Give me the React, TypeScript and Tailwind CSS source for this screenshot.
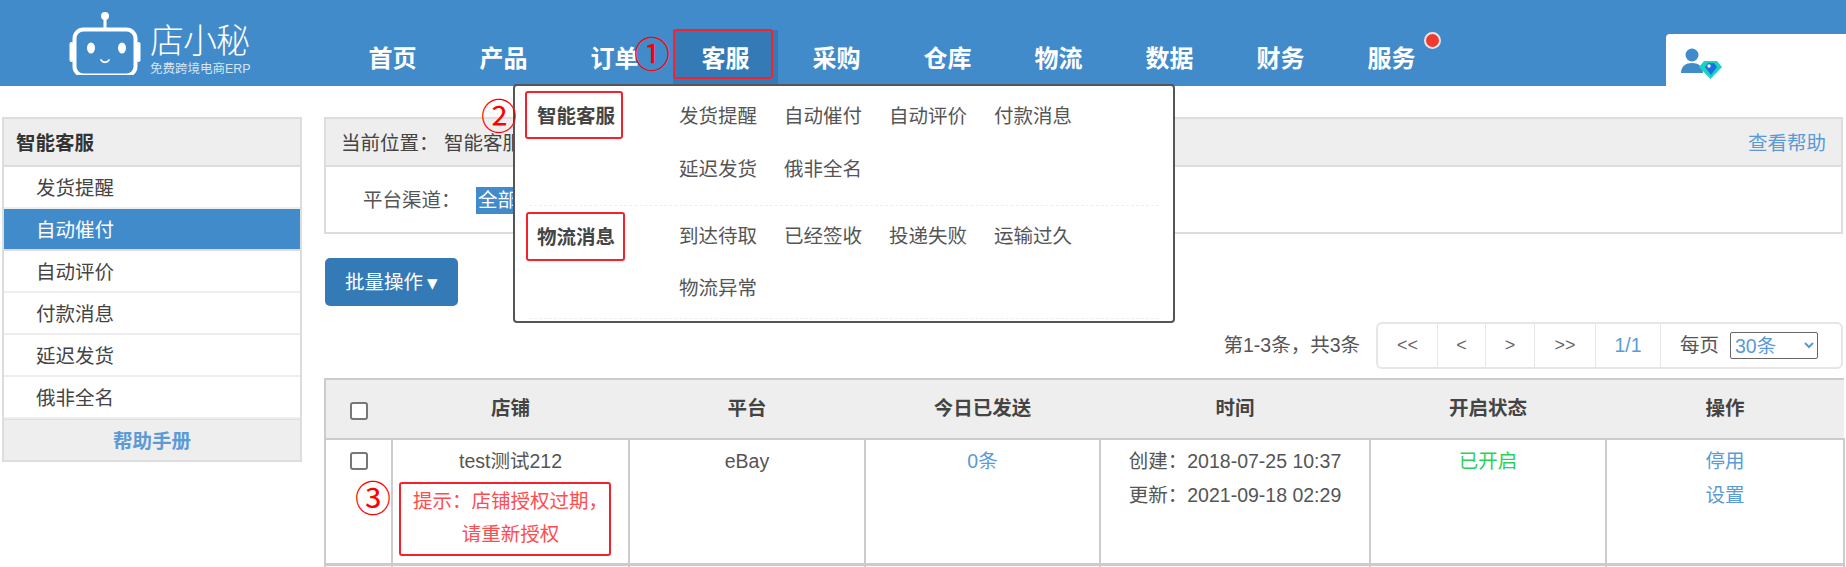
import React from "react";

const nav = ["首页", "产品", "订单", "客服", "采购", "仓库", "物流", "数据", "财务", "服务"];
const side = ["发货提醒", "自动催付", "自动评价", "付款消息", "延迟发货", "俄非全名"];
const fontFamily = '"Liberation Sans", "Noto Sans CJK SC", sans-serif';

function Logo() {
  return (
    <svg width="72" height="68" viewBox="0 0 72 68" className="shrink-0">
      <circle cx="36" cy="9" r="4" fill="#fff" />
      <rect x="34.500" y="10" width="3" height="12" fill="#fff" />
      <rect x="5.500" y="22.500" width="61" height="46" rx="9" fill="none" stroke="#fff" strokeWidth="4" />
      <rect x="0.500" y="35" width="4" height="20" rx="2" fill="#fff" />
      <rect x="67.500" y="35" width="4" height="20" rx="2" fill="#fff" />
      <ellipse cx="22" cy="41" rx="4" ry="5.500" fill="#fff" />
      <ellipse cx="53" cy="41" rx="4" ry="5.500" fill="#fff" />
      <path d="M32 53c2 3 6 3 8 0" fill="none" stroke="#fff" strokeWidth="1.800" strokeLinecap="round" />
    </svg>
  );
}

function UserIcon() {
  return (
    <svg width="42" height="32" viewBox="0 0 42 32">
      <circle cx="11" cy="8" r="6.500" fill="#428bca" />
      <path d="M0 26c0-7 5-10 11-10s11 3 11 10z" fill="#428bca" />
      <path d="M18 20l5-6h13l5 6-11.500 12z" fill="#19d3c5" />
      <path d="M24 20l3-4h6l3 4-6 8z" fill="#1c6fe0" />
      <circle cx="28" cy="19" r="1.700" fill="#fff" />
    </svg>
  );
}

function DropRow({ title, rows, box, titleBox, rowBox }: { title: string; rows: string[][]; box: string; titleBox: string; rowBox: string }) {
  return (
    <div className={box}>
      <div className={titleBox}>{title}</div>
      <div>
        {rows.map((r) => (
          <div key={r[0]} className={rowBox}>
            {r.map((t) => (
              <span key={t} className="w-[78px] whitespace-nowrap">{t}</span>
            ))}
          </div>
        ))}
      </div>
    </div>
  );
}

function Check() {
  return (
    <input
      type="checkbox"
      className="block h-[18px] w-[18px] appearance-none rounded-[3px] border-2 border-[#777] bg-white"
    />
  );
}

const th = "h-[60px] border-b-2 border-[#ccc] bg-[#eee] text-center font-bold text-[#444]";
const td = "border-r-2 border-b-[3px] border-[#ccc] p-0 pt-[4px] text-center align-top leading-[34px]";
const pageCell = "flex h-full items-center justify-center border-r border-[#e6e6e6] text-[#666]";

export default function App() {
  return (
    <div
      className="relative h-[567px] w-[1846px] overflow-hidden bg-white text-[19.5px] text-[#555]"
      style={{ fontFamily }}
    >
      <header className="flex h-[86px] items-end bg-[#428bca] text-white">
        <div className="flex h-[86px] w-[337px] shrink-0 items-start pl-[69px] pt-[7px]">
          <Logo />
          <div className="ml-[9px] w-[110px]">
            <div className="mt-[15px] text-[34px] leading-[39px] font-light tracking-[-1px] whitespace-nowrap">店小秘</div>
            <div className="mt-[1px] text-[12.5px] leading-[14px] whitespace-nowrap text-[#d5e5f3]">免费跨境电商ERP</div>
          </div>
        </div>
        <nav className="flex h-[56px]">
          {nav.map((n) => (
            <div key={n} className="relative flex h-[56px] w-[111px] items-center justify-center pt-[2px]">
              {n === "客服" && <div className="absolute inset-x-[3px] inset-y-0 bg-[#337ab7]" />}
              <span className="relative text-[24px] font-bold">{n}</span>
              {n === "服务" && (
                <span className="absolute left-[88px] top-[2px] h-[17px] w-[17px] rounded-full border-2 border-[#e6e6e6] bg-[#f0392f]" />
              )}
            </div>
          ))}
        </nav>
        <div className="ml-auto flex h-[52px] w-[180px] rounded-tl-[4px] bg-white pl-[15px] pt-[13px]">
          <UserIcon />
        </div>
      </header>

      <main className="flex pl-[2px] pt-[31px]">
        <aside className="h-[345px] w-[300px] shrink-0 border-2 border-[#ddd]">
          <div className="flex h-[48px] items-center border-b-2 border-[#ddd] bg-[#eee] pl-[12px] pt-[3px] font-bold text-[#333]">智能客服</div>
          {side.map((s, i) => (
            <div
              key={s}
              className={
                i === 1
                  ? "flex h-[42px] items-center border-b-2 border-[#ddd] bg-[#428bca] pl-[32px] pt-[3px] text-white"
                  : "flex h-[42px] items-center border-b-2 border-[#eee] pl-[32px] pt-[3px] text-[#444]"
              }
            >
              {s}
            </div>
          ))}
          <div className="flex h-[41px] items-center justify-center border-t border-[#ddd] bg-[#eee] pt-[3px] font-bold text-[#5b9ad6]">帮助手册</div>
        </aside>

        <section className="ml-[22px] w-[1519px] shrink-0">
          <div className="h-[117px] border-2 border-[#ddd]">
            <div className="flex h-[48px] items-center justify-between border-b-2 border-[#ddd] bg-[#eee] px-[15px] pt-[3px] text-[#444]">
              <span className="whitespace-nowrap">当前位置：&nbsp;智能客服</span>
              <span className="text-[#5b9ad6]">查看帮助</span>
            </div>
            <div className="flex items-center pl-[37px] pt-[19px]">
              <span className="w-[113px]">平台渠道：</span>
              <span className="bg-[#428bca] px-[2px] leading-[27px] text-white">全部</span>
            </div>
          </div>

          <button className="ml-[1px] mt-[24px] flex h-[48px] w-[133px] items-center justify-center gap-[4px] rounded-[5px] bg-[#337ab7] pt-[1px] text-white">
            批量操作<span className="text-[21px] leading-[20px]">▾</span>
          </button>

          <div className="mt-[16px] flex items-center justify-end">
            <span className="mr-[16px] whitespace-nowrap">第1-3条，共3条</span>
            <div className="flex h-[47px] w-[467px] items-center rounded-[6px] border-2 border-[#e6e6e6] text-[18px]">
              <span className={pageCell + " w-[60px]"}>&lt;&lt;</span>
              <span className={pageCell + " w-[48px]"}>&lt;</span>
              <span className={pageCell + " w-[49px]"}>&gt;</span>
              <span className={pageCell + " w-[61px]"}>&gt;&gt;</span>
              <span className="flex h-full w-[65px] items-center justify-center border-r border-[#e6e6e6] text-[19.5px] text-[#5b9ad6]">1/1</span>
              <span className="ml-[19px] text-[19.5px]">每页</span>
              <select className="ml-[11px] h-[27px] w-[88px] rounded-[2px] border border-[#666] bg-white text-[19.5px] text-[#5b9ad6]">
                <option>30条</option>
              </select>
            </div>
          </div>

          <table className="mt-[9px] w-[1519px] table-fixed border-collapse border-l-2 border-t-2 border-[#ccc]">
            <colgroup>
              <col className="w-[67px]" />
              <col className="w-[237px]" />
              <col className="w-[236px]" />
              <col className="w-[235px]" />
              <col className="w-[270px]" />
              <col className="w-[236px]" />
              <col className="w-[238px]" />
            </colgroup>
            <thead>
              <tr>
                <th className={th}>
                  <div className="ml-[24px] mt-[4px]"><Check /></div>
                </th>
                <th className={th}>店铺</th>
                <th className={th}>平台</th>
                <th className={th}>今日已发送</th>
                <th className={th}>时间</th>
                <th className={th}>开启状态</th>
                <th className={th}>操作</th>
              </tr>
            </thead>
            <tbody>
              <tr className="h-[125px]">
                <td className={td}>
                  <div className="ml-[24px] mt-[8px]"><Check /></div>
                </td>
                <td className={td}>
                  <div>test测试212</div>
                  <div className="mt-[7px] leading-[33px] text-[#ff4d4f]">
                    提示：店铺授权过期，
                    <br />
                    请重新授权
                  </div>
                </td>
                <td className={td}>eBay</td>
                <td className={td + " text-[#5b9ad6]"}>0条</td>
                <td className={td}>
                  <div>创建：2018-07-25 10:37</div>
                  <div>更新：2021-09-18 02:29</div>
                </td>
                <td className={td + " text-[#2ad15a]"}>已开启</td>
                <td className={td + " text-[#5b9ad6]"}>
                  <div>停用</div>
                  <div>设置</div>
                </td>
              </tr>
              <tr className="h-[40px]">
                <td className={td} />
                <td className={td} />
                <td className={td} />
                <td className={td} />
                <td className={td} />
                <td className={td} />
                <td className={td} />
              </tr>
            </tbody>
          </table>
        </section>
      </main>

      {/* dropdown menu over the page */}
      <div className="absolute left-[513px] top-[84px] h-[239px] w-[662px] rounded-[4px] border-2 border-[#555] bg-white">
        <DropRow
          box="flex h-[119px] pt-[4px]"
          titleBox="w-[164px] pl-[22px] font-bold leading-[52px] text-[#444]"
          rowBox="flex h-[53px] items-center gap-[27px]"
          title="智能客服"
          rows={[["发货提醒", "自动催付", "自动评价", "付款消息"], ["延迟发货", "俄非全名"]]}
        />
        <div className="mx-[14px] border-t border-dashed border-[#eee]" />
        <DropRow
          box="flex h-[112px] pt-[5px]"
          titleBox="w-[164px] pl-[22px] font-bold leading-[52px] text-[#444]"
          rowBox="flex h-[52px] items-center gap-[27px]"
          title="物流消息"
          rows={[["到达待取", "已经签收", "投递失败", "运输过久"], ["物流异常"]]}
        />
        <div className="mx-[14px] border-t border-dashed border-[#eee]" />
      </div>

      {/* red annotations */}
      <div className="absolute left-[673px] top-[29px] h-[50px] w-[100px] rounded-[3px] border-2 border-[#f5222d]" />
      <div className="absolute left-[525px] top-[91px] h-[48px] w-[98px] rounded-[3px] border-2 border-[#f5222d]" />
      <div className="absolute left-[526px] top-[212px] h-[49px] w-[99px] rounded-[3px] border-2 border-[#f5222d]" />
      <div className="absolute left-[399px] top-[482px] h-[74px] w-[212px] rounded-[3px] border-2 border-[#f5222d]" />
      <span className="absolute left-[634px] top-[35px] text-[36px] leading-[42px] text-[#f00]">①</span>
      <span className="absolute left-[481px] top-[97px] text-[36px] leading-[42px] text-[#f00]">②</span>
      <span className="absolute left-[355px] top-[479px] text-[36px] leading-[42px] text-[#f00]">③</span>
    </div>
  );
}
